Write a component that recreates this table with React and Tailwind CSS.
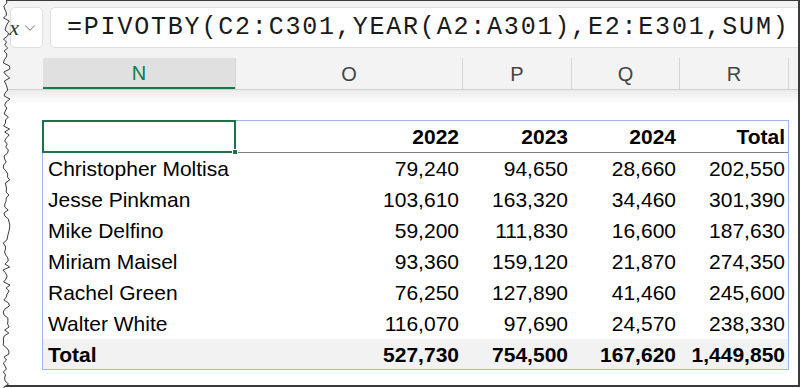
import React from "react";
import { ChevronDown } from "lucide-react";

const rows = [
  ["Christopher Moltisa", "79,240", "94,650", "28,660", "202,550"],
  ["Jesse Pinkman", "103,610", "163,320", "34,460", "301,390"],
  ["Mike Delfino", "59,200", "111,830", "16,600", "187,630"],
  ["Miriam Maisel", "93,360", "159,120", "21,870", "274,350"],
  ["Rachel Green", "76,250", "127,890", "41,460", "245,600"],
  ["Walter White", "116,070", "97,690", "24,570", "238,330"],
];

const totals = ["Total", "527,730", "754,500", "167,620", "1,449,850"];

// column widths shared by the pivot table rows
const cols = "grid-cols-[192px_227px_109px_108px_109px]";

// jagged "torn paper" edge down the left side
const tornPoints = (() => {
  let seed = 7;
  const rand = () => {
    seed = (seed * 9301 + 49297) % 233280;
    return seed / 233280;
  };
  const pts = [];
  for (let y = 0; y <= 392; y += 3) {
    pts.push([6.5 + rand() * 7 - 3.5, y]);
  }
  return pts;
})();

const TornEdge = () => {
  const line = tornPoints.map(([x, y]) => `${x.toFixed(1)},${y}`).join(" ");
  return (
    <svg
      className="absolute left-0 top-0 pointer-events-none"
      width="16"
      height="388"
      viewBox="0 0 16 388"
    >
      <polygon points={`0,0 ${line} 0,392`} fill="#ffffff" />
      <polyline points={line} fill="none" stroke="#3c3c3c" strokeWidth="1" />
    </svg>
  );
};

const Cell = ({ children, first, bold }) => (
  <div
    className={`flex items-center whitespace-nowrap ${
      first ? "pl-[5px]" : "justify-end pr-[3px]"
    } ${bold ? "font-bold" : ""}`}
  >
    {children}
  </div>
);

export default function App() {
  return (
    <div className="relative w-[800px] h-[388px] overflow-hidden bg-white font-['Liberation_Sans',Arial,sans-serif]">
      <div className="h-[387px] flex flex-col border-t border-r-2 border-b-2 border-[#3a3a3a]">
        {/* formula bar */}
        <div className="h-[57px] shrink-0 bg-[#f3f3f3] flex gap-[7px] pl-[10px] pt-[6px]">
          <div className="w-[33px] h-[41px] bg-white rounded-[5px] border border-[#e0e0e0] flex items-center">
            <span className="-ml-[13px] font-['Liberation_Serif',serif] italic text-[22px] text-[#333] leading-none">
              f
            </span>
            <span className="ml-[5px] font-['Liberation_Serif',serif] italic text-[22px] text-[#333] leading-none">
              x
            </span>
            <ChevronDown size={18} strokeWidth={1.4} className="ml-[2px] text-[#8a8a8a]" />
          </div>
          <div className="flex-1 h-[41px] bg-white rounded-l-[5px] border border-r-0 border-[#e0e0e0] flex items-center pl-[16px]">
            <span className="font-['Liberation_Mono',monospace] text-[25px] tracking-[1.8px] text-[#1a1a1a] leading-none">
              =PIVOTBY(C2:C301,YEAR(A2:A301),E2:E301,SUM)
            </span>
          </div>
        </div>

        {/* column letters */}
        <div className="h-[32px] shrink-0 flex bg-[#f3f3f3] border-b border-[#cfcfcf] text-[20px] leading-none">
          <div className="w-[43px] shrink-0" />
          <div className="w-[192px] shrink-0 bg-[#e0e0e0] border-b-2 border-[#107c41] flex items-center justify-center text-[#107c41]">
            N
          </div>
          <div className="w-[227px] shrink-0 border-l border-[#d6d6d6] flex items-center justify-center text-[#444]">
            O
          </div>
          <div className="w-[109px] shrink-0 border-l border-[#d6d6d6] flex items-center justify-center text-[#444]">
            P
          </div>
          <div className="w-[108px] shrink-0 border-l border-[#d6d6d6] flex items-center justify-center text-[#444]">
            Q
          </div>
          <div className="w-[110px] shrink-0 border-l border-r border-[#d6d6d6] flex items-center justify-center text-[#444]">
            R
          </div>
        </div>

        {/* sheet */}
        <div className="flex-1 relative bg-white">
          <div className="h-[14px] bg-gradient-to-b from-[#ebebeb] to-white" />
          <div className="ml-[42px] mt-[16px] w-[747px] border border-[#9db7e2] text-[21px] text-black leading-none relative">
            <div className={`grid ${cols} h-[32px] border-b border-[#808080]`}>
              <Cell first />
              <Cell bold>2022</Cell>
              <Cell bold>2023</Cell>
              <Cell bold>2024</Cell>
              <Cell bold>Total</Cell>
            </div>
            {rows.map((r) => (
              <div key={r[0]} className={`grid ${cols} h-[31px]`}>
                {r.map((v, i) => (
                  <Cell key={i} first={i === 0}>
                    {v}
                  </Cell>
                ))}
              </div>
            ))}
            <div className={`grid ${cols} h-[30px] bg-[#f2f2f2]`}>
              {totals.map((v, i) => (
                <Cell key={i} first={i === 0} bold>
                  {v}
                </Cell>
              ))}
            </div>

            {/* active cell outline with fill handle */}
            <div className="absolute -left-[1px] -top-[1px] w-[194px] h-[33px] border-2 border-[#1e7145]">
              <div className="absolute -right-[4px] -bottom-[4px] w-[6px] h-[6px] bg-[#1e7145] border border-white" />
            </div>
          </div>
        </div>
      </div>
      <TornEdge />
    </div>
  );
}
